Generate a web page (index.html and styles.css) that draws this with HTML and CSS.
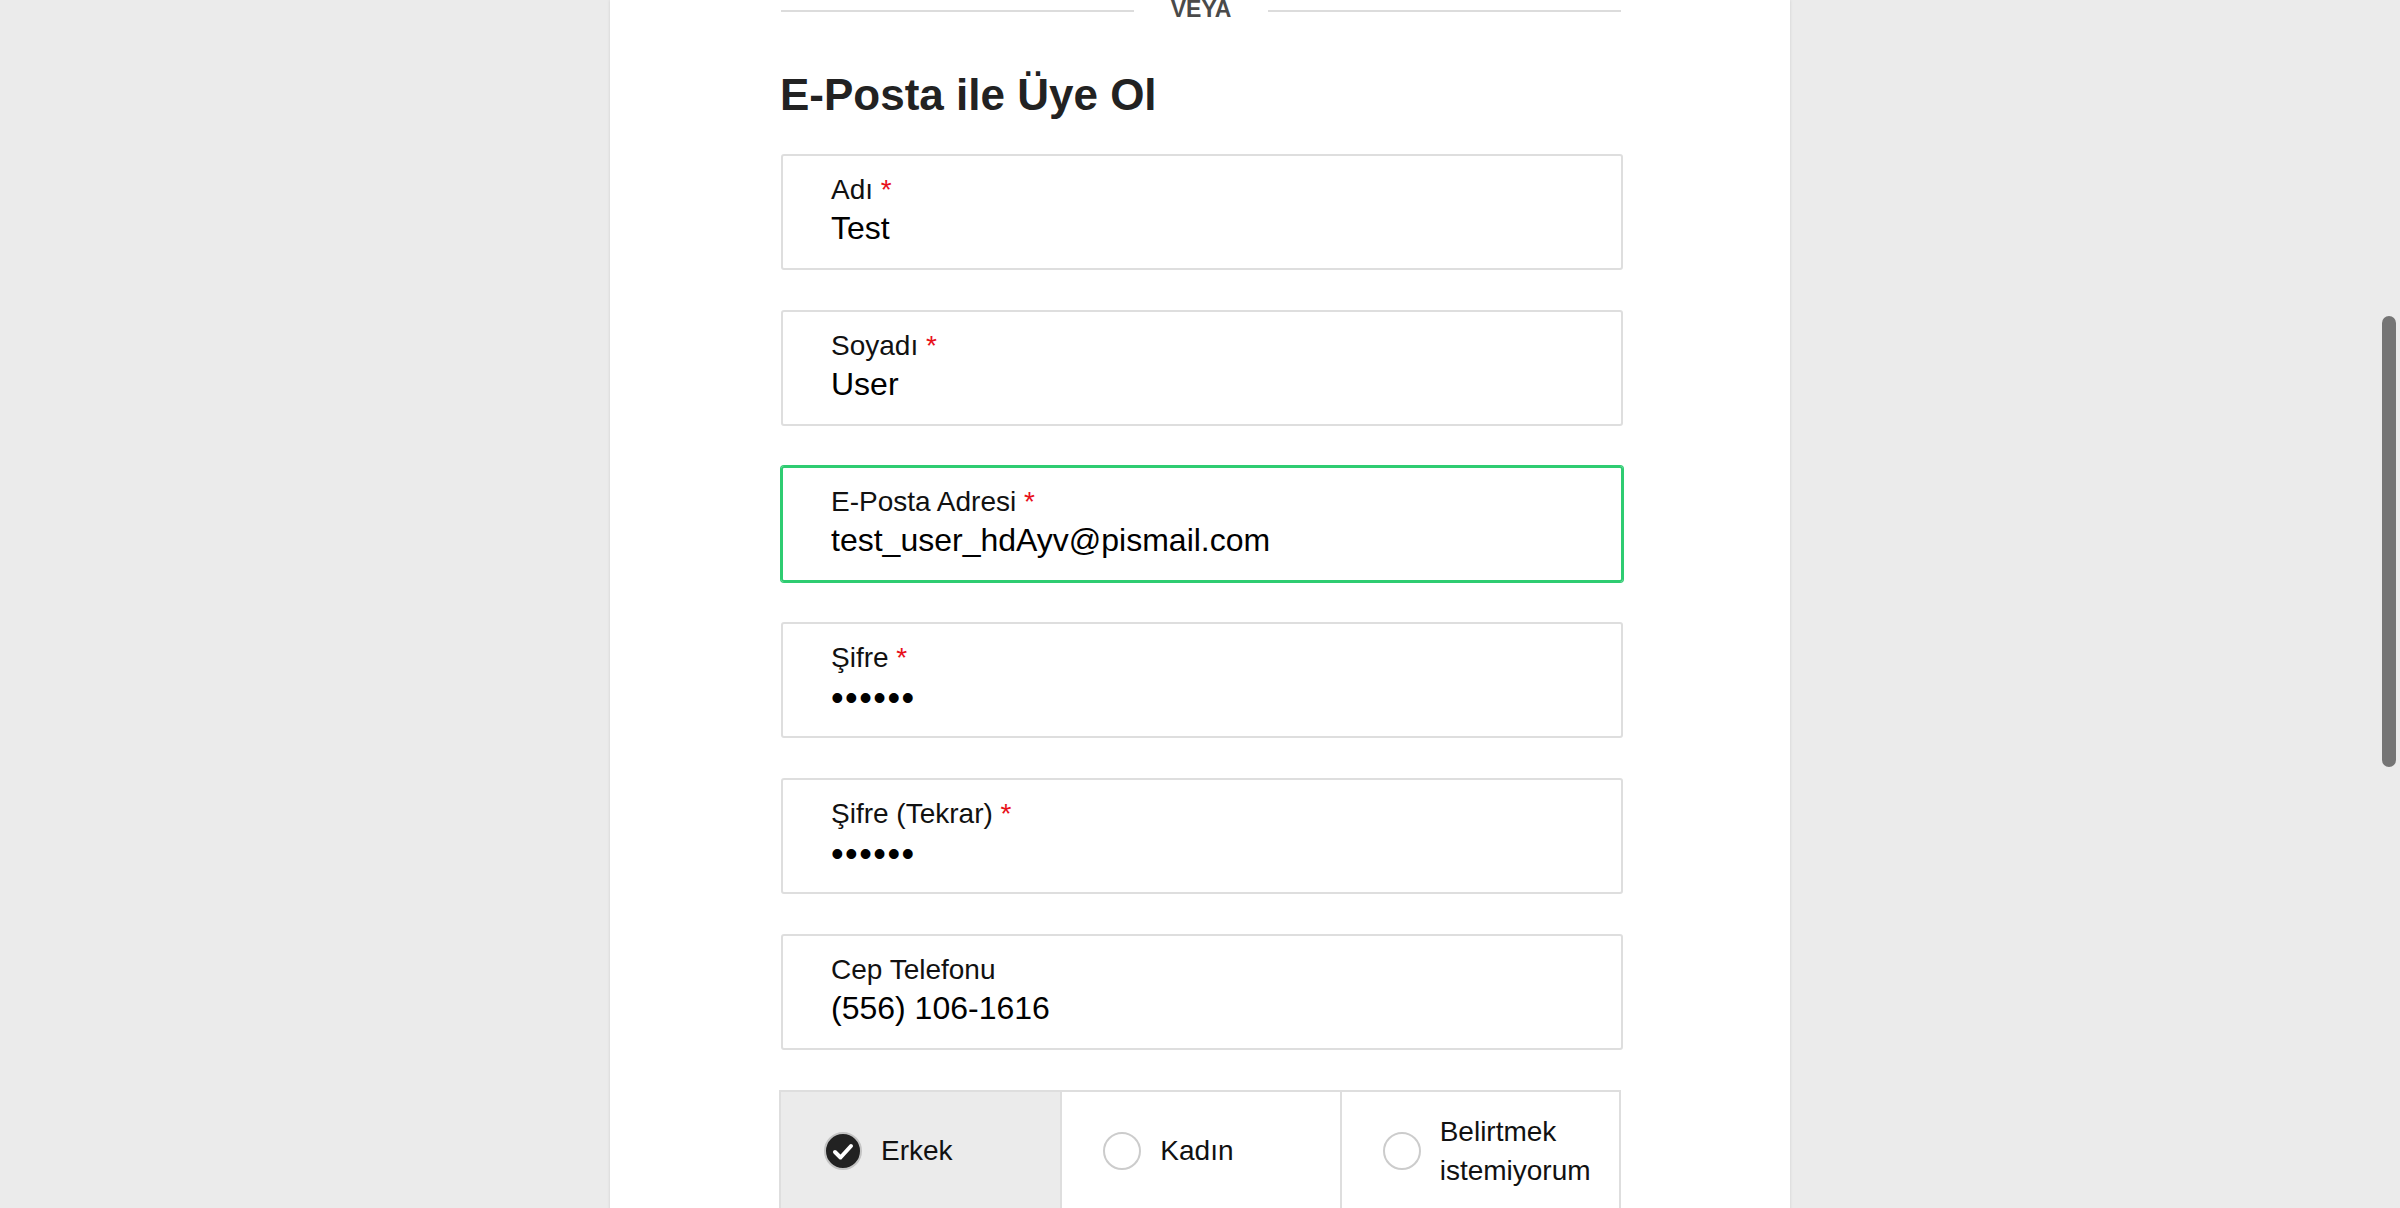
FILE: index.html
```html
<!DOCTYPE html>
<html lang="tr">
<head>
<meta charset="utf-8">
<title>E-Posta ile Üye Ol</title>
<link rel="stylesheet" href="styles.css">
</head>
<body>
<div class="page">
  <main class="card">
    <div class="form-wrap">
      <div class="divider">
        <span class="divider-line"></span>
        <span class="divider-text">VEYA</span>
        <span class="divider-line"></span>
      </div>
      <h2 class="title">E-Posta ile Üye Ol</h2>

      <div class="field">
        <div class="field-label">Adı <span class="req">*</span></div>
        <div class="field-value">Test</div>
      </div>
      <div class="field">
        <div class="field-label">Soyadı <span class="req">*</span></div>
        <div class="field-value">User</div>
      </div>
      <div class="field field-active">
        <div class="field-label">E-Posta Adresi <span class="req">*</span></div>
        <div class="field-value">test_user_hdAyv@pismail.com</div>
      </div>
      <div class="field">
        <div class="field-label">Şifre <span class="req">*</span></div>
        <div class="field-value field-pass">••••••</div>
      </div>
      <div class="field">
        <div class="field-label">Şifre (Tekrar) <span class="req">*</span></div>
        <div class="field-value field-pass">••••••</div>
      </div>
      <div class="field">
        <div class="field-label">Cep Telefonu</div>
        <div class="field-value">(556) 106-1616</div>
      </div>

      <div class="gender">
        <div class="gender-opt gender-selected">
          <svg class="radio" width="38" height="38" viewBox="0 0 38 38">
            <circle cx="19" cy="19" r="18" fill="#222" stroke="#c4c4c4" stroke-width="2"/>
            <polyline points="11,20 16.5,25.5 27,14" fill="none" stroke="#fff" stroke-width="4" stroke-linecap="round" stroke-linejoin="round"/>
          </svg>
          <span class="gender-text">Erkek</span>
        </div>
        <div class="gender-opt">
          <span class="radio radio-empty"></span>
          <span class="gender-text">Kadın</span>
        </div>
        <div class="gender-opt">
          <span class="radio radio-empty"></span>
          <span class="gender-text">Belirtmek istemiyorum</span>
        </div>
      </div>
    </div>
  </main>
</div>
<div class="scroll-thumb"></div>
</body>
</html>
```

FILE: styles.css
```css
html, body {
  margin: 0;
  padding: 0;
}

body {
  background: #ebebeb;
  height: 1208px;
  overflow: hidden;
  font-family: "Liberation Sans", Arial, Helvetica, sans-serif;
  color: #111;
}

.page {
  display: flex;
  justify-content: center;
}

.card {
  width: 1180px;
  min-height: 1208px;
  background: #fff;
  box-shadow: 0 0 3px rgba(0, 0, 0, 0.12);
}

.form-wrap {
  width: 842px;
  margin: 0 0 0 171px;
}

.divider {
  display: flex;
  align-items: flex-start;
  margin-top: -2px;
  padding: 0 2px 0 0;
}

.divider-line {
  flex: 1;
  height: 2px;
  margin-top: 12px;
  background: #dcdcdc;
}

.divider-text {
  font-size: 23px;
  line-height: 23px;
  font-weight: 700;
  color: #4a4a4a;
  padding: 0 37px;
}

.title {
  margin: 48px 0 33px;
  margin-left: -1px;
  font-size: 44px;
  line-height: 52px;
  font-weight: 700;
  color: #222;
}

.field {
  border: 2px solid #dedede;
  border-radius: 3px;
  padding: 18px 48px 21px;
  margin-bottom: 40px;
}

.field-active {
  border-color: #2ecc71;
  box-shadow: 0 0 0 1px #2ecc71;
}

.field-label {
  font-size: 28px;
  line-height: 32px;
  color: #111;
}

.req {
  color: #e8101a;
}

.field-value {
  margin-top: 3px;
  font-size: 32px;
  line-height: 38px;
  color: #000;
}

.field-pass {
  letter-spacing: 1.5px;
  font-size: 36px;
  line-height: 36px;
  padding-top: 3px;
  height: 35px;
}

.gender {
  display: grid;
  grid-template-columns: 1fr 1fr 1fr;
  border: 2px solid #dedede;
  width: 838px;
  margin-left: -2px;
}

.gender-opt {
  display: flex;
  align-items: center;
  height: 117px;
  padding: 0 18px 3px 41px;
  border-left: 2px solid #dedede;
}

.gender-opt:first-child {
  border-left: none;
  padding-left: 43px;
}

.gender-selected {
  background: #ebebeb;
}

.radio {
  flex: none;
  width: 38px;
  height: 38px;
  margin-right: 19px;
  box-sizing: border-box;
}

.radio-empty {
  display: block;
  border: 2px solid #cccccc;
  border-radius: 50%;
  background: #fff;
}

.gender-text {
  font-size: 28px;
  line-height: 39px;
  color: #111;
}

.scroll-thumb {
  position: fixed;
  left: 2382px;
  top: 316px;
  width: 14px;
  height: 451px;
  border-radius: 7px;
  background: #757575;
}
```
